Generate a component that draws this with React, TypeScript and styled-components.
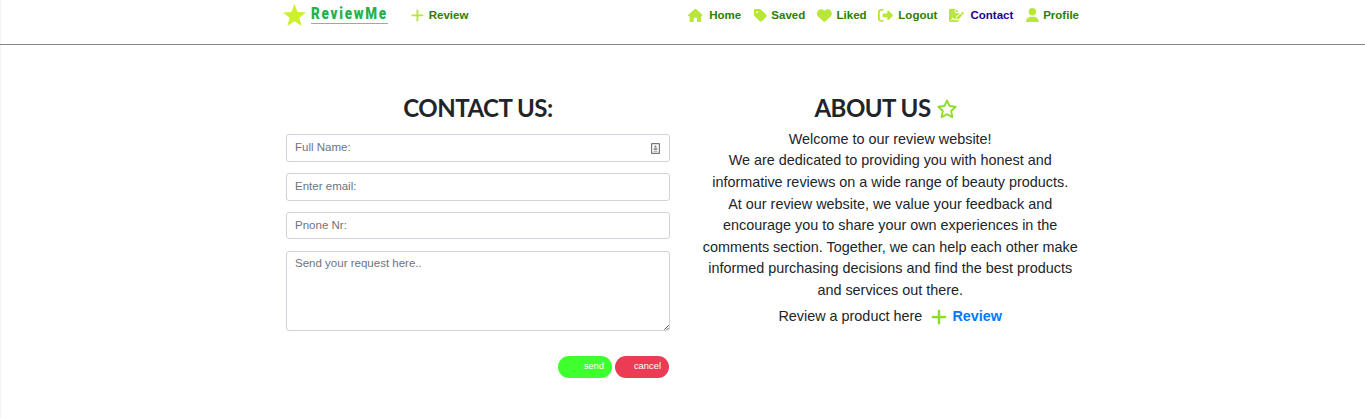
import React from 'react';
import styled, { createGlobalStyle } from 'styled-components';
import {
  FaHouse,
  FaTag,
  FaHeart,
  FaRightFromBracket,
  FaFileSignature,
  FaUser,
  FaPlus,
} from 'react-icons/fa6';

const GlobalStyle = createGlobalStyle`
  *, *::before, *::after { box-sizing: border-box; }
  body {
    margin: 0;
    background: #fff;
    color: #212529;
    font-family: "Liberation Sans", Arial, sans-serif;
    overflow: hidden;
  }
`;

const Page = styled.div`
  height: 418px;
  border-left: 1px solid #f4f4f4;
`;

const Header = styled.header`
  height: 45px;
  margin-left: -1px;
  padding: 0 286px 14px 283px;
  border-bottom: 1px solid #888;
  display: flex;
  align-items: center;
`;

const Brand = styled.div`
  display: flex;
  align-items: center;
  width: 127px;
  color: #cbf02c;
`;

const BrandName = styled.span`
  width: 77px;
  height: 19px;
  margin: 0 0 1px 5px;
  border-bottom: 1.5px solid #5fd07f;
  color: #22b24c;
`;

const BrandText = styled.span`
  display: block;
  transform: scaleX(0.84);
  transform-origin: left;
  font: 900 16px/17px Roboto, sans-serif;
  letter-spacing: 2.1px;
  white-space: nowrap;
`;

const NavLink = styled.a<{ $active?: boolean; $slot?: number }>`
  display: flex;
  align-items: center;
  font-size: 11.52px;
  font-weight: 700;
  line-height: 17px;
  color: ${(p) => (p.$active ? '#1f0099' : '#2b8000')};

  > span {
    display: flex;
    width: ${(p) => p.$slot ?? 18}px;
  }

  svg {
    height: 14.8px;
    width: auto;
    color: #b8e639;
  }
`;

const Nav = styled.nav`
  margin-left: auto;
  display: flex;
  gap: 11.7px;
`;

const Main = styled.main`
  display: grid;
  grid-template-columns: 384px 384px;
  column-gap: 28px;
  padding: 49px 0 0 285px;
`;

const Column = styled.section`
  display: flex;
  flex-direction: column;
`;

const Heading = styled.h2`
  margin: 0 0 12.3px;
  height: 28px;
  display: flex;
  align-items: center;
  justify-content: center;
  gap: 6px;
  font: 700 24px/28px Lato, sans-serif;
  letter-spacing: -0.5px;
  white-space: nowrap;
`;

const AboutHeading = styled(Heading)`
  margin-bottom: 6.8px;
  padding-right: 9px;

  svg {
    margin-top: 2px;
  }
`;

const Field = styled.div`
  display: flex;
  align-items: center;
  height: 27.4px;
  margin-bottom: 11.5px;
  padding-right: 9px;
  border: 1px solid #ced4da;
  border-radius: 3px;

  svg {
    margin-top: 2px;
  }
`;

const Input = styled.input`
  flex: 1;
  min-width: 0;
  border: 0;
  outline: 0;
  background: transparent;
  padding: 0 8px;
  font: 11.52px/17px "Liberation Sans", Arial, sans-serif;
  &::placeholder { color: #6c757d; }
`;

const MessageBox = styled.div`
  position: relative;
  display: flex;

  svg {
    position: absolute;
    right: 1px;
    bottom: 1px;
  }
`;

const TextArea = styled.textarea`
  flex: 1;
  height: 80px;
  padding: 3px 8px;
  border: 1px solid #ced4da;
  border-radius: 3px;
  outline: 0;
  resize: none;
  font: 11.52px/17.3px "Liberation Sans", Arial, sans-serif;
  &::placeholder { color: #6c757d; }
`;

const Actions = styled.div`
  display: flex;
  justify-content: flex-end;
  gap: 3px;
  padding: 25px 1px 0 0;
`;

const Button = styled.button<{ $color: string }>`
  width: 54px;
  height: 22px;
  padding: 0 8px 2px 0;
  border: 0;
  border-radius: 11px;
  background: ${(p) => p.$color};
  color: #fff;
  text-align: right;
  font: 9.4px/14px "Liberation Sans", Arial, sans-serif;
`;

const About = styled.p`
  margin: 0 -0.2px 4.4px 0.2px;
  font-size: 14.4px;
  line-height: 21.6px;
  text-align: center;
  white-space: nowrap;
`;

const ReviewLink = styled.a`
  margin-left: 8px;
  color: #007bff;
  font-weight: 700;

  svg {
    width: 18px;
    height: 18px;
    margin: -2px 4px -2px 0;
    vertical-align: -3px;
    color: #8cdd28;
    stroke: currentColor;
    stroke-width: 5px;
  }
`;

const links = [
  { label: 'Home', icon: <FaHouse />, slot: 21.7 },
  { label: 'Saved', icon: <FaTag />, slot: 18.4 },
  { label: 'Liked', icon: <FaHeart />, slot: 19.6 },
  { label: 'Logout', icon: <FaRightFromBracket />, slot: 20 },
  { label: 'Contact', icon: <FaFileSignature />, slot: 21.4, active: true },
  { label: 'Profile', icon: <FaUser />, slot: 18.2 },
];

const BrandStar = () => (
  <svg width="23" height="23" viewBox="0 0 24 24">
    <path d="M12 0 15.2 8.4 24 8.8 17.1 14.4 19.4 23 12 18.1 4.6 23 6.9 14.4 0 8.8 8.8 8.4Z" fill="currentColor" />
  </svg>
);

const OutlineStar = () => (
  <svg width="20" height="20" viewBox="0 0 24 24" fill="none">
    <path
      d="M12 1.8 15.1 8.4 22.4 9.3 17 14.4 18.4 21.8 12 18.3 5.6 21.8 7 14.4 1.6 9.3 8.9 8.4Z"
      stroke="#8cdd28"
      strokeWidth="2.2"
      strokeLinejoin="round"
    />
  </svg>
);

const AutofillIcon = () => (
  <svg width="9" height="11" viewBox="0 0 9 11" fill="none">
    <rect x="0.6" y="0.6" width="7.8" height="9.8" rx="0.3" stroke="#777" strokeWidth="1.2" />
    <circle cx="4.5" cy="3.5" r="1" fill="#777" />
    <path d="M3 5h3v2H3zM2.5 8.5h4" stroke="#aaa" strokeWidth="0.8" fill="#888" />
  </svg>
);

const ResizeGrip = () => (
  <svg width="5" height="5" viewBox="0 0 5 5">
    <path d="M0.3 4.7 4.7 0.3M2.8 4.7 4.7 2.8" stroke="#444" strokeWidth="0.9" />
  </svg>
);

export default function App() {
  return (
    <Page>
      <GlobalStyle />
      <Header>
        <Brand>
          <BrandStar />
          <BrandName>
            <BrandText>ReviewMe</BrandText>
          </BrandName>
        </Brand>
        <NavLink $slot={18.7}>
          <span>
            <FaPlus />
          </span>
          Review
        </NavLink>
        <Nav>
          {links.map((l) => (
            <NavLink key={l.label} $active={l.active} $slot={l.slot}>
              <span>{l.icon}</span>
              {l.label}
            </NavLink>
          ))}
        </Nav>
      </Header>
      <Main>
        <Column>
          <Heading>CONTACT US:</Heading>
          <Field>
            <Input placeholder="Full Name:" />
            <AutofillIcon />
          </Field>
          <Field>
            <Input placeholder="Enter email:" />
          </Field>
          <Field>
            <Input placeholder="Pnone Nr:" />
          </Field>
          <MessageBox>
            <TextArea placeholder="Send your request here.." />
            <ResizeGrip />
          </MessageBox>
          <Actions>
            <Button $color="#3fff2e">send</Button>
            <Button $color="#eb3b55">cancel</Button>
          </Actions>
        </Column>
        <Column>
          <AboutHeading>
            ABOUT US <OutlineStar />
          </AboutHeading>
          <About>
            Welcome to our review website!
            <br />
            We are dedicated to providing you with honest and
            <br />
            informative reviews on a wide range of beauty products.
            <br />
            At our review website, we value your feedback and
            <br />
            encourage you to share your own experiences in the
            <br />
            comments section. Together, we can help each other make
            <br />
            informed purchasing decisions and find the best products
            <br />
            and services out there.
          </About>
          <About>
            Review a product here
            <ReviewLink>
              <FaPlus />
              Review
            </ReviewLink>
          </About>
        </Column>
      </Main>
    </Page>
  );
}
